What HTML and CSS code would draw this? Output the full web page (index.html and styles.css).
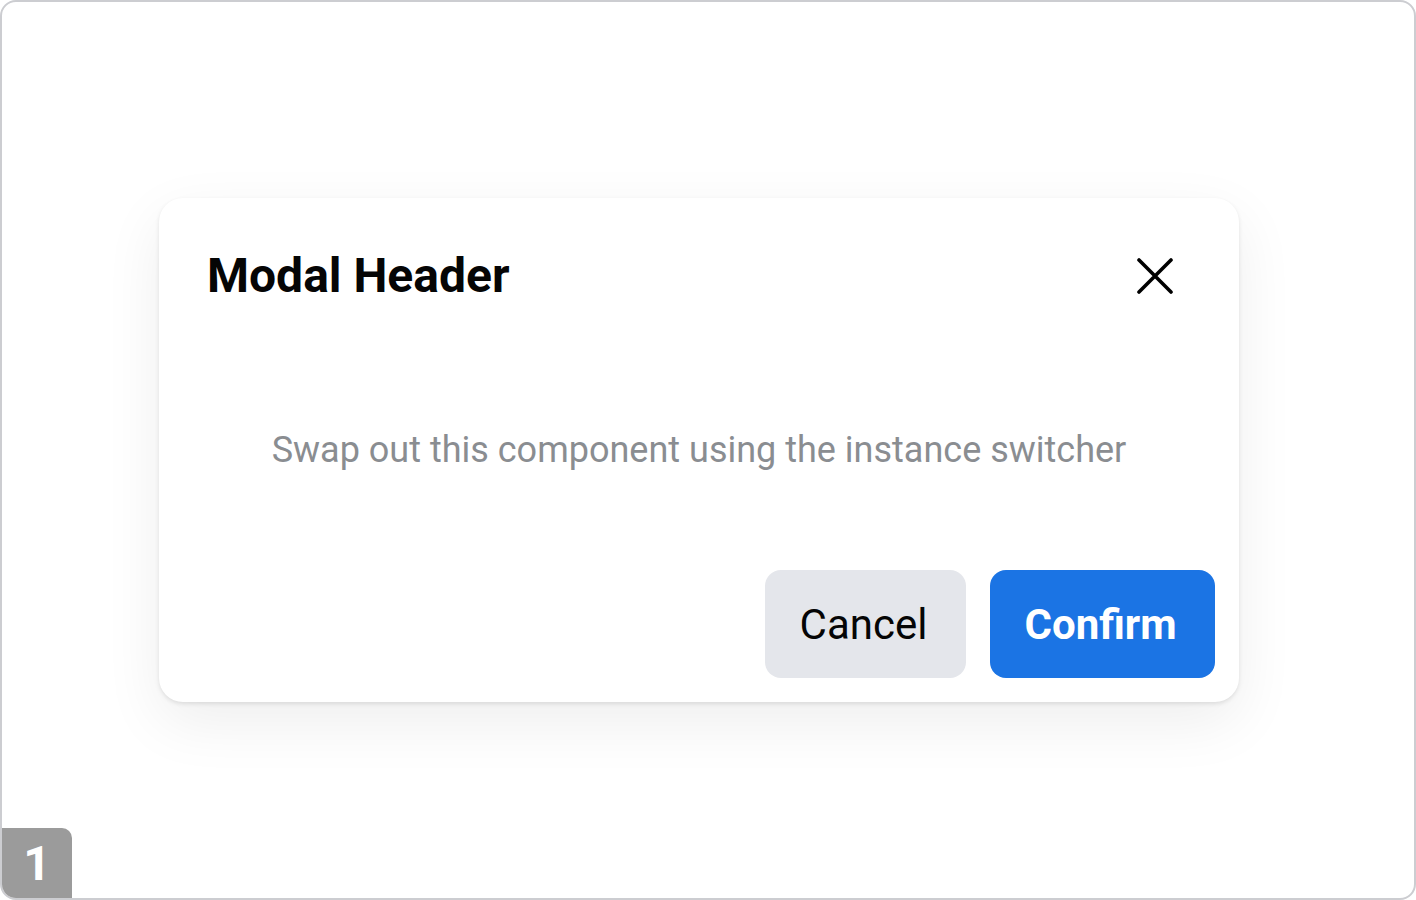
FILE: index.html
```html
<!DOCTYPE html>
<html>
<head>
<meta charset="utf-8">
<link rel="stylesheet" href="styles.css">
</head>
<body>
<div class="frame">
  <div class="modal">
    <div class="modal-header">
      <h1 class="title">Modal Header</h1>
      <button class="close" aria-label="Close">
        <svg width="36" height="36" viewBox="0 0 36 36"><path d="M2 2L34 34M34 2L2 34" stroke="#000" stroke-width="3.6" stroke-linecap="round" fill="none"/></svg>
      </button>
    </div>
    <div class="modal-body">
      <p class="body-text">Swap out this component using the instance switcher</p>
    </div>
    <div class="modal-footer">
      <button class="btn btn-secondary">Cancel</button>
      <button class="btn btn-primary">Confirm</button>
    </div>
  </div>
  <div class="badge">1</div>
</div>
</body>
</html>
```

FILE: styles.css
```css
* { box-sizing: border-box; }
html, body { margin: 0; padding: 0; background: #fff; }
body { font-family: Roboto, "Liberation Sans", sans-serif; }
.frame {
  position: relative;
  width: 1416px;
  height: 900px;
  border: 2px solid #cccdd1;
  border-radius: 16px;
  background: #fff;
  overflow: hidden;
  display: flex;
  align-items: center;
  padding-left: 157px;
}
.modal {
  width: 1080px;
  height: 504px;
  background: #fff;
  border-radius: 24px;
  box-shadow: 0 2px 4px rgba(0,0,0,0.1), 0 20px 60px rgba(0,0,0,0.07);
  display: flex;
  flex-direction: column;
}
.modal-header {
  display: flex;
  justify-content: space-between;
  align-items: center;
  padding: 50px 66px 0 48px;
}
.title {
  margin: 0;
  font-size: 48px;
  font-weight: 700;
  color: #050505;
  line-height: 56px;
}
.close {
  border: 0;
  background: transparent;
  padding: 0;
  width: 36px;
  height: 36px;
  display: block;
}
.close svg { display: block; }
.modal-body {
  flex: 1;
  display: flex;
  align-items: center;
  justify-content: center;
  padding-top: 26px;
}
.body-text {
  margin: 0;
  font-size: 36px;
  color: #8a8d91;
  line-height: 44px;
}
.modal-footer {
  display: flex;
  justify-content: flex-end;
  gap: 24px;
  padding: 0 24px 24px;
}
.btn {
  height: 108px;
  border: 0;
  border-radius: 16px;
  font-family: Roboto, "Liberation Sans", sans-serif;
  font-size: 42px;
  padding: 0 4px 0 0;
}
.btn-secondary { background: #e4e6eb; color: #050505; width: 201px; }
.btn-primary { background: #1b74e4; color: #fff; font-weight: 700; width: 225px; }
.badge {
  position: absolute;
  left: 0;
  bottom: 0;
  width: 70px;
  height: 70px;
  background: #9b9b9b;
  color: #fff;
  border-top-right-radius: 10px;
  font-size: 48px;
  font-weight: 700;
  display: flex;
  align-items: center;
  justify-content: center;
}
```
